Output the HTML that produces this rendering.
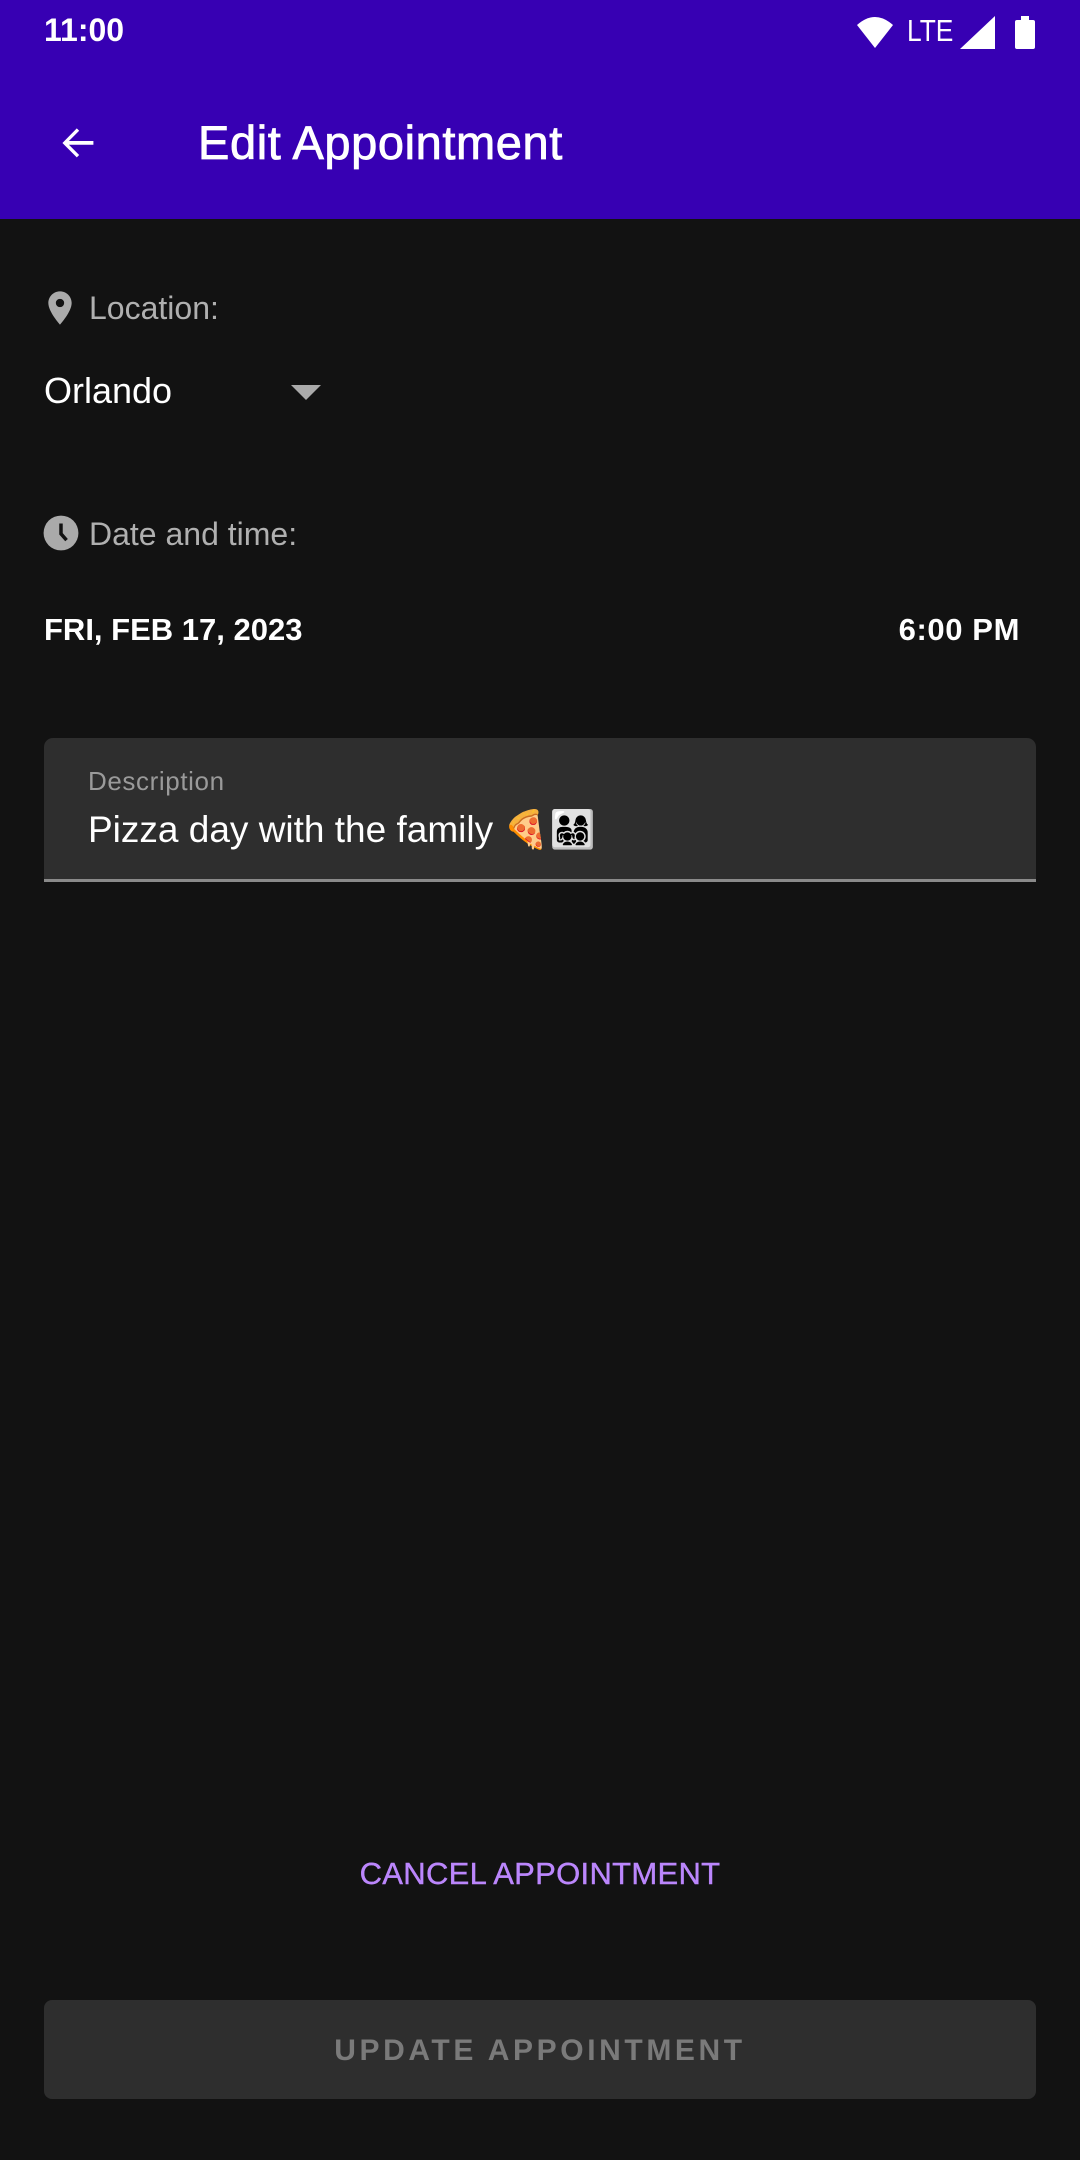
<!DOCTYPE html>
<html><head><meta charset="utf-8"><style>
*{margin:0;padding:0;box-sizing:border-box}
body{width:1080px;height:2160px;background:#121212;font-family:"Liberation Sans",sans-serif;position:relative;overflow:hidden;color:#fff}
.a{position:absolute;white-space:nowrap}
</style></head><body>
<div class="a" style="left:0;top:0;width:1080px;height:219px;background:#3700b3"></div>
<div class="a" style="left:44px;top:12px;font-size:32px;font-weight:bold;line-height:36px">11:00</div>
<svg class="a" style="left:855px;top:15px" width="40" height="34" viewBox="0 0 40 34"><path d="M20 33 L2 10 Q20 -6 38 10 Z" fill="#fff"/></svg>
<div class="a" style="left:907px;top:13px;font-size:31px;line-height:36px;transform:scaleX(0.85);transform-origin:left">LTE</div>
<svg class="a" style="left:960px;top:16px" width="36" height="33"><path d="M35 0 V33 H0 Z" fill="#fff"/></svg>
<div class="a" style="left:1015px;top:20px;width:20px;height:29px;background:#fff;border-radius:2px"></div>
<div class="a" style="left:1021px;top:16px;width:8px;height:5px;background:#fff"></div>
<svg class="a" style="left:53px;top:119px" width="48" height="48" viewBox="0 0 24 24"><path d="M20 11.2H7.5l5.3-5.3-0.9-0.9L5 12l6.9 6.9 0.9-0.9-5.3-5.3H20z" fill="#fff" stroke="#fff" stroke-width="0.4"/></svg>
<div class="a" style="left:198px;top:115px;font-size:47px;line-height:56px;-webkit-text-stroke:0.8px #fff;letter-spacing:0.6px">Edit Appointment</div>

<svg class="a" style="left:40px;top:288px" width="40" height="40" viewBox="0 0 24 24"><path d="M12 2C8.13 2 5 5.13 5 9c0 5.25 7 13 7 13s7-7.75 7-13c0-3.87-3.13-7-7-7zm0 9.5a2.5 2.5 0 110-5 2.5 2.5 0 010 5z" fill="#aaa"/></svg>
<div class="a" style="left:89px;top:290px;font-size:32px;line-height:36px;color:#b0b0b0">Location:</div>
<div class="a" style="left:44px;top:369px;font-size:36px;line-height:44px">Orlando</div>
<svg class="a" style="left:291px;top:385px" width="30" height="16"><path d="M0 0H30L15 15Z" fill="#aaa"/></svg>

<svg class="a" style="left:42px;top:514px" width="38" height="38" viewBox="0 0 24 24"><circle cx="12" cy="12" r="11" fill="#aaa"/><path d="M12 6V12.5L15.5 16.5" stroke="#121212" stroke-width="2.2" fill="none"/></svg>
<div class="a" style="left:89px;top:516px;font-size:32px;line-height:36px;color:#b0b0b0">Date and time:</div>
<div class="a" style="left:44px;top:611px;font-size:31px;font-weight:bold;line-height:38px">FRI, FEB 17, 2023</div>
<div class="a" style="right:60px;top:611px;font-size:31px;font-weight:bold;line-height:38px;letter-spacing:0.6px">6:00 PM</div>

<div class="a" style="left:44px;top:738px;width:992px;height:144px;background:#2e2e2e;border-radius:9px 9px 0 0;border-bottom:3px solid #8a8a8a"></div>
<div class="a" style="left:88px;top:766px;font-size:26px;line-height:30px;color:#9a9a9a;letter-spacing:0.6px">Description</div>
<div class="a" style="left:88px;top:808px;font-size:37px;line-height:44px">Pizza day with the family 🍕👨‍👩‍👧‍👦</div>

<div class="a" style="left:0;width:1080px;text-align:center;top:1856px;font-size:31px;line-height:36px;color:#bb86fc;-webkit-text-stroke:0.4px #bb86fc;letter-spacing:0.3px">CANCEL APPOINTMENT</div>

<div class="a" style="left:44px;top:2000px;width:992px;height:99px;background:#2e2e2e;border-radius:8px"></div>
<div class="a" style="left:0;width:1080px;text-align:center;top:2033px;font-size:30px;line-height:36px;color:#7a7a7a;font-weight:bold;letter-spacing:3.6px">UPDATE APPOINTMENT</div>
</body></html>
